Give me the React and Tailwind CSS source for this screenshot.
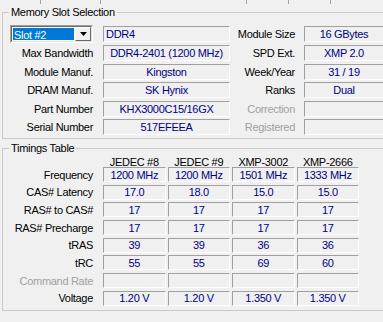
import React from 'react';

const VAL = 'text-[#000080]';

function Field({ children, w, align = 'center', h = 'h-[16px]' }) {
  return (
    <div
      className={`${w} ${h} border border-t-[#a0a0a0] border-l-[#a0a0a0] border-r-white border-b-white flex items-center ${align === 'left' ? 'justify-start pl-[2px]' : 'justify-center'} ${VAL} whitespace-nowrap overflow-hidden`}
    >
      {children}
    </div>
  );
}

function Label({ children, w, disabled }) {
  return (
    <div className={`${w} text-right whitespace-nowrap ${disabled ? 'text-[#a0a0a0]' : 'text-black'}`}>
      {children}
    </div>
  );
}

function Group({ title, className, children }) {
  return (
    <div className={`relative border border-[#c8c8c8] ml-[2px] w-[400px] ${className}`}>
      <span className="absolute left-[6px] top-[-8px] px-[2px] bg-[#f0f0f0] leading-[14px]">{title}</span>
      {children}
    </div>
  );
}

function SlotCombo() {
  return (
    <div className="w-[83px] h-[18px] border border-t-[#a0a0a0] border-l-[#a0a0a0] border-r-white border-b-white">
      <div className="h-full border border-t-[#696969] border-l-[#696969] border-r-[#e3e3e3] border-b-[#e3e3e3] bg-white flex">
        <div className="flex-1 m-[1px] bg-[#0078d7] text-white pl-[1px] leading-[14px]">Slot #2</div>
        <div className="w-[16px] h-full bg-[#f0f0f0] border border-t-white border-l-white border-r-[#696969] border-b-[#696969] flex items-center justify-center">
          <svg width="7" height="4" viewBox="0 0 7 4">
            <path d="M0 0h7L3.5 4z" fill="#000" />
          </svg>
        </div>
      </div>
    </div>
  );
}

const memRows = [
  ['Max Bandwidth', 'DDR4-2401 (1200 MHz)', 'SPD Ext.', 'XMP 2.0'],
  ['Module Manuf.', 'Kingston', 'Week/Year', '31 / 19'],
  ['DRAM Manuf.', 'SK Hynix', 'Ranks', 'Dual'],
  ['Part Number', 'KHX3000C15/16GX', 'Correction', ''],
  ['Serial Number', '517EFEEA', 'Registered', ''],
];

const timingRows = [
  ['Frequency', ['1200 MHz', '1200 MHz', '1501 MHz', '1333 MHz']],
  ['CAS# Latency', ['17.0', '18.0', '15.0', '15.0']],
  ['RAS# to CAS#', ['17', '17', '17', '17']],
  ['RAS# Precharge', ['17', '17', '17', '17']],
  ['tRAS', ['39', '39', '36', '36']],
  ['tRC', ['55', '55', '69', '60']],
  ['Command Rate', ['', '', '', ''], true],
  ['Voltage', ['1.20 V', '1.20 V', '1.350 V', '1.350 V']],
];

const cols = ['JEDEC #8', 'JEDEC #9', 'XMP-3002', 'XMP-2666'];

export default function App() {
  return (
    <div
      className="w-[383px] h-[322px] overflow-hidden bg-[#f0f0f0] text-[11px] tracking-[-0.3px] leading-[14px]"
      style={{ fontFamily: '"Liberation Sans", Arial, sans-serif' }}
    >
      <div className="flex h-[4px]">
        <div className="w-[40px]" />
        <div className="w-[60px] border-l border-[#a0a0a0]" />
        <div className="w-[146px] border-l border-[#a0a0a0]" />
        <div className="w-[42px] border-l border-[#a0a0a0]" />
        <div className="w-[42px] border-l border-[#a0a0a0]" />
        <div className="flex-1 border-l border-[#a0a0a0]" />
      </div>

      <Group title="Memory Slot Selection" className="mt-[8px] h-[127px]">
        <div className="pt-[12px] pl-[7px] flex flex-col gap-[2.4px]">
          <div className="flex items-center h-[18px]">
            <SlotCombo />
            <div className="ml-[10px]">
              <Field w="w-[127px]" align="left">DDR4</Field>
            </div>
            <Label w="w-[65px]">Module Size</Label>
            <div className="ml-[9px]">
              <Field w="w-[80px]">16 GBytes</Field>
            </div>
          </div>
          {memRows.map(([l1, v1, l2, v2]) => (
            <div key={l1} className="flex items-center h-[16px]">
              <Label w="w-[83px]">{l1}</Label>
              <div className="ml-[10px]">
                <Field w="w-[127px]">{v1}</Field>
              </div>
              <Label w="w-[65px]" disabled={l2 === 'Correction' || l2 === 'Registered'}>{l2}</Label>
              <div className="ml-[9px]">
                <Field w="w-[80px]">{v2}</Field>
              </div>
            </div>
          ))}
        </div>
      </Group>

      <Group title="Timings Table" className="mt-[9px] h-[163px]">
        <div className="pt-[4px] pl-[7px] flex flex-col gap-[2.7px]">
          <div className="flex h-[14px] -mb-[2.7px] pt-[2px]">
            <div className="w-[83px]" />
            <div className="ml-[10px] flex gap-[2px]">
              {cols.map((c) => (
                <div key={c} className="w-[62.5px] text-center text-black">{c}</div>
              ))}
            </div>
          </div>
          {timingRows.map(([label, vals, disabled]) => (
            <div key={label} className="flex items-center h-[15px]">
              <Label w="w-[83px]" disabled={disabled}>{label}</Label>
              <div className="ml-[10px] flex gap-[2px]">
                {vals.map((v, i) => (
                  <Field key={i} w="w-[62.5px]" h="h-[15px]">{v}</Field>
                ))}
              </div>
            </div>
          ))}
        </div>
      </Group>
    </div>
  );
}
